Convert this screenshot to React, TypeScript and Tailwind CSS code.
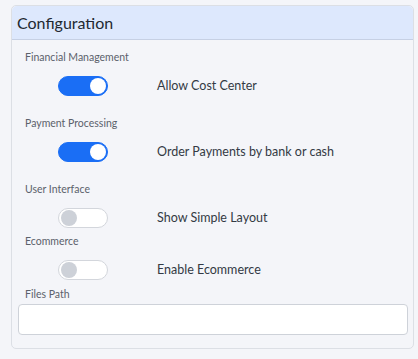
import { useState } from "react";

type Setting = {
  group: string;
  label: string;
  on: boolean;
  gap: string;
};

const settings: Setting[] = [
  { group: "Financial Management", label: "Allow Cost Center", on: true, gap: "mt-[10px]" },
  { group: "Payment Processing", label: "Order Payments by bank or cash", on: true, gap: "mt-[20px]" },
  { group: "User Interface", label: "Show Simple Layout", on: false, gap: "mt-[20px]" },
  { group: "Ecommerce", label: "Enable Ecommerce", on: false, gap: "mt-[6px]" },
];

function Toggle({ on, onChange }: { on: boolean; onChange: () => void }) {
  return (
    <button
      onClick={onChange}
      className={`relative w-[50px] h-[20px] rounded-full border shrink-0 ${
        on ? "bg-[#1a6ef5] border-[#1a6ef5]" : "bg-white border-[#d3d6dc]"
      }`}
    >
      <span
        className={`absolute top-[1px] w-[16px] h-[16px] rounded-full ${
          on ? "left-[31px] bg-white" : "left-[2px] bg-[#cdd1d8]"
        }`}
      />
    </button>
  );
}

export default function App() {
  const [values, setValues] = useState(settings.map((s) => s.on));
  const [path, setPath] = useState("");

  return (
    <div className="min-h-[359px] bg-[#f4f5f9] pt-[5px] pl-[11px] pr-[4px] font-['Lato',sans-serif]">
      <div className="rounded-[5px] border border-[#dcdfe5] bg-[#f4f5f9]">
        {/* Header */}
        <div className="h-[34px] flex items-center pl-[5px] bg-[#dde8fd] border-b border-[#c6d0e4] rounded-t-[5px]">
          <h1 className="text-[16px] leading-none text-[#222831]">Configuration</h1>
        </div>

        {/* Body */}
        <div className="pl-[6px] pr-[5px] pb-[13px]">
          {settings.map((s, i) => (
            <div key={s.group} className={s.gap}>
              <div className="pl-[7px] h-[16px] flex items-center text-[10.5px] text-[#5b616b]">
                {s.group}
              </div>
              <div className="mt-[10px] h-[20px] flex items-center pl-[40px]">
                <Toggle
                  on={values[i]}
                  onChange={() => setValues((v) => v.map((x, j) => (j === i ? !x : x)))}
                />
                <span className="ml-[49px] text-[12.5px] text-[#333a44]">{s.label}</span>
              </div>
            </div>
          ))}

          <div className="mt-[7px] pl-[7px] h-[16px] flex items-center text-[10.5px] text-[#5b616b]">
            Files Path
          </div>
          <input
            value={path}
            onChange={(e) => setPath(e.target.value)}
            className="mt-[1px] block w-full h-[31px] rounded-[4px] border border-[#ced2d9] bg-white px-2 text-[13px] outline-none"
          />
        </div>
      </div>
    </div>
  );
}
